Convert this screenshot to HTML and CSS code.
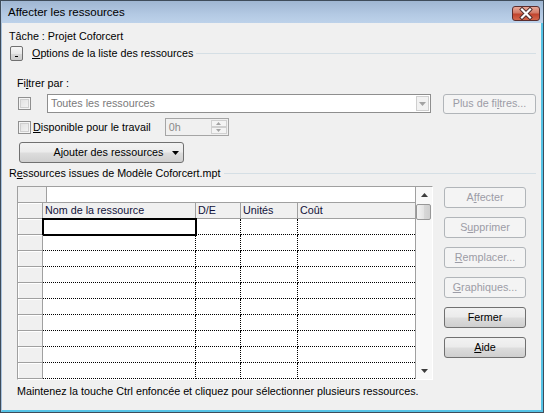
FILE: index.html
```html
<!DOCTYPE html>
<html lang="fr">
<head>
<meta charset="utf-8">
<title>Affecter les ressources</title>
<link rel="stylesheet" href="styles.css">
</head>
<body>
<div class="window">
  <div class="titlebar">
    <span class="title">Affecter les ressources</span>
    <div class="close">
      <svg width="28" height="15" viewBox="0 0 28 15">
        <path d="M10 3.5 L18 11.5 M18 3.5 L10 11.5" stroke="#4a2a2a" stroke-width="4" stroke-linecap="square"/>
        <path d="M10 3.5 L18 11.5 M18 3.5 L10 11.5" stroke="#ffffff" stroke-width="2.2" stroke-linecap="square"/>
      </svg>
    </div>
  </div>
  <div class="client">
    <div class="task">Tâche : Projet Coforcert</div>
    <div class="options">
      <span class="collapse"><span class="dash"></span></span>
      <span class="opt-label"><u>O</u>ptions de la liste des ressources</span>
      <span class="rule"></span>
    </div>
    <div class="filters">
      <div class="filter-title">Fi<u>l</u>trer par :</div>
      <div class="filter-row">
        <span class="check"></span>
        <div class="combo">
          <span class="combo-text">Toutes les ressources</span>
          <span class="combo-btn"><svg width="7" height="4" viewBox="0 0 7 4"><path d="M0 0 H7 L3.5 4 Z" fill="#a3a3a3"/></svg></span>
        </div>
        <button class="btn dis more">Plus de fi<u>l</u>tres...</button>
      </div>
      <div class="avail-row">
        <span class="check"></span>
        <span class="avail-label"><u>D</u>isponible pour le travail</span>
        <div class="spin">
          <span class="spin-text">0h</span>
          <div class="spin-btns">
            <span class="sb"><svg width="5" height="3" viewBox="0 0 5 3"><path d="M0 3 H5 L2.5 0 Z" fill="#a3a3a3"/></svg></span>
            <span class="sb"><svg width="5" height="3" viewBox="0 0 5 3"><path d="M0 0 H5 L2.5 3 Z" fill="#a3a3a3"/></svg></span>
          </div>
        </div>
      </div>
      <button class="btn add"><span class="add-text">A<u>j</u>outer des ressources</span><svg class="add-arrow" width="7" height="4" viewBox="0 0 7 4"><path d="M0 0 H7 L3.5 4 Z" fill="#000"/></svg></button>
    </div>
    <div class="section">
      <span class="sec-label">R<u>e</u>ssources issues de Modèle Coforcert.mpt</span>
      <span class="rule"></span>
    </div>
    <div class="main">
      <div class="grid">
        <div class="sheet">
          <div class="editbar"><span class="edit-box"></span><span class="edit-field"></span></div>
          <div class="hd rh"></div>
          <div class="hd">Nom de la ressource</div>
          <div class="hd">D/E</div>
          <div class="hd">Unités</div>
          <div class="hd last">Coût</div>

          <div class="rh"></div><div class="c sel"></div><div class="c"></div><div class="c"></div><div class="c last"></div>
          <div class="rh"></div><div class="c"></div><div class="c"></div><div class="c"></div><div class="c last"></div>
          <div class="rh"></div><div class="c"></div><div class="c"></div><div class="c"></div><div class="c last"></div>
          <div class="rh"></div><div class="c"></div><div class="c"></div><div class="c"></div><div class="c last"></div>
          <div class="rh"></div><div class="c"></div><div class="c"></div><div class="c"></div><div class="c last"></div>
          <div class="rh"></div><div class="c"></div><div class="c"></div><div class="c"></div><div class="c last"></div>
          <div class="rh"></div><div class="c"></div><div class="c"></div><div class="c"></div><div class="c last"></div>
          <div class="rh"></div><div class="c"></div><div class="c"></div><div class="c"></div><div class="c last"></div>
          <div class="rh"></div><div class="c"></div><div class="c"></div><div class="c"></div><div class="c last"></div>
          <div class="rh"></div><div class="c"></div><div class="c"></div><div class="c"></div><div class="c last"></div>
        </div>
        <div class="vscroll">
          <span class="arrow"><svg width="7" height="4" viewBox="0 0 7 4"><path d="M0 4 H7 L3.5 0 Z" fill="#3c3c3c"/></svg></span>
          <span class="thumb"></span>
          <span class="track"></span>
          <span class="arrow"><svg width="7" height="4" viewBox="0 0 7 4"><path d="M0 0 H7 L3.5 4 Z" fill="#3c3c3c"/></svg></span>
        </div>
      </div>
      <div class="actions">
        <button class="btn dis">A<u>f</u>fecter</button>
        <button class="btn dis">S<u>u</u>pprimer</button>
        <button class="btn dis"><u>R</u>emplacer...</button>
        <button class="btn dis"><u>G</u>raphiques...</button>
        <button class="btn">Fermer</button>
        <button class="btn"><u>A</u>ide</button>
      </div>
    </div>
    <div class="footer">Maintenez la touche Ctrl enfoncée et cliquez pour sélectionner plusieurs ressources.</div>
  </div>
</div>
</body>
</html>
```
FILE: styles.css
```css
* { box-sizing: border-box; }
html, body { margin: 0; padding: 0; }
body {
  width: 544px;
  height: 413px;
  overflow: hidden;
  font-family: "Liberation Sans", Arial, sans-serif;
  font-size: 10.75px;
  line-height: 13px;
  color: #000;
  background: #fff;
}
u { text-decoration: underline; text-underline-offset: 1px; }

.window {
  width: 544px;
  height: 413px;
  border: 1px solid #3f4c5a;
  display: flex;
  flex-direction: column;
  background: #f0f0f0;
}

.titlebar {
  height: 22px;
  flex: none;
  display: flex;
  align-items: center;
  padding: 0 3px 0 6px;
  background: linear-gradient(#9fb6d2, #b3c9e3 60%, #bdd2ea);
  border-left: 1px solid #b3c8e0;
}
.title {
  flex: 1;
  font-size: 11.5px;
  padding-top: 1px;
  color: #000;
}
.close {
  width: 28px;
  height: 15px;
  margin-top: 2px;
  border: 1px solid #5b2d2d;
  border-radius: 3px;
  background: linear-gradient(#e9a898, #d27a66 45%, #c0442e 55%, #d4674c);
  display: flex;
  align-items: center;
  justify-content: center;
  overflow: hidden;
}
.close svg { display: block; margin: -1px; }

.client {
  flex: 1;
  display: flex;
  flex-direction: column;
  padding: 7px 5px 0 7px;
  border-left: 1px solid #a9c3df;
  border-right: 2px solid #55c3e6;
  border-bottom: 2px solid #55c3e6;
  background: #f0f0f0;
}

.task { height: 13px; }

.options {
  display: flex;
  align-items: center;
  height: 15px;
  margin-top: 3px;
}
.collapse {
  width: 13px;
  height: 15px;
  margin-left: 1px;
  border: 1px solid #707070;
  border-radius: 2px;
  background: linear-gradient(#f6f6f6, #e8e8e8 50%, #d8d8d8 51%, #cdcdcd);
  display: flex;
  align-items: flex-end;
  justify-content: center;
  padding-bottom: 3px;
}
.dash { width: 3px; height: 1px; background: #000; }
.opt-label { margin-left: 9px; }
.rule {
  flex: 1;
  height: 1px;
  margin-left: 3px;
  background: #d5dfe5;
}

.filters {
  display: flex;
  flex-direction: column;
  align-items: flex-start;
  padding-left: 8px;
  margin-top: 16px;
}
.filter-title { height: 13px; }

.check {
  width: 13px;
  height: 13px;
  flex: none;
  margin-left: 1px;
  border: 1px solid #8f8f8f;
  background: linear-gradient(135deg, #dedede, #f6f6f6);
  box-shadow: inset 0 0 0 1px #f4f4f4, inset 0 0 0 2px #cfcfcf;
}

.filter-row {
  display: flex;
  align-items: center;
  height: 19px;
  margin-top: 4px;
}
.combo {
  width: 384px;
  height: 19px;
  margin-left: 16px;
  border: 1px solid #8e8e8e;
  background: #fff;
  display: flex;
  align-items: center;
  padding: 0 1px 0 3px;
}
.combo-text { flex: 1; color: #7a7a7a; }
.combo-btn {
  width: 13px;
  height: 15px;
  border: 1px solid #cfcfcf;
  background: #f2f2f2;
  display: flex;
  align-items: center;
  justify-content: center;
}
.combo-btn svg, .sb svg, .arrow svg, .add-arrow { display: block; }

.btn {
  height: 21px;
  padding: 0;
  border: 1px solid #707070;
  border-radius: 3px;
  background: linear-gradient(#f2f2f2, #ebebeb 48%, #dddddd 52%, #cfcfcf);
  font-family: "Liberation Sans", Arial, sans-serif;
  font-size: 10.75px;
  font-weight: 400;
  line-height: 13px;
  color: #000;
  display: flex;
  align-items: center;
  justify-content: center;
}
.btn.dis {
  border-color: #b1b5b9;
  background: #f4f4f4;
  color: #9c9ca6;
}
.more { width: 93px; height: 20px; margin-left: 12px; }

.avail-row {
  display: flex;
  align-items: center;
  height: 18px;
  margin-top: 5px;
}
.avail-label { margin-left: 2px; }
.spin {
  width: 64px;
  height: 18px;
  margin-left: 14px;
  border: 1px solid #a5a5a5;
  background: #f0f0f0;
  display: flex;
  align-items: center;
  padding: 0 1px 0 3px;
}
.spin-text { flex: 1; color: #8a8a8a; }
.spin-btns {
  width: 16px;
  height: 14px;
  display: flex;
  flex-direction: column;
}
.sb {
  flex: 1;
  border: 1px solid #d0d0d0;
  background: #f4f4f4;
  display: flex;
  align-items: center;
  justify-content: center;
}

.add {
  width: 165px;
  margin-top: 6px;
  margin-left: 2px;
  justify-content: flex-start;
  padding-left: 25px;
}
.add-text { width: 127px; text-align: center; }
.add-arrow { margin-left: 0; }

.section {
  display: flex;
  align-items: center;
  height: 13px;
  margin-top: 4px;
}

.main {
  display: flex;
  align-items: flex-start;
  margin-top: 6px;
  padding-left: 8px;
}
.grid {
  display: flex;
  border: 1px solid;
  border-color: #a0a0a0 #ffffff #ffffff #a0a0a0;
}
.sheet {
  display: grid;
  grid-template-columns: 25px 153px 45px 57px 117px;
  grid-auto-rows: 16px;
  background: #fff;
}
.editbar {
  grid-column: 1 / -1;
  display: flex;
  border-bottom: 1px solid #a0a0a0;
}
.edit-box {
  width: 29px;
  background: #f0f0f0;
  border-right: 1px solid #a0a0a0;
}
.edit-field { flex: 1; background: #fff; }

.hd {
  background: #f0f0f0;
  border-right: 1px solid #a0a0a0;
  border-bottom: 1px solid #a0a0a0;
  padding-left: 2px;
  line-height: 15px;
  white-space: nowrap;
  color: #10103a;
}
.rh {
  background: #f0f0f0;
  border-right: 1px solid #a0a0a0;
  border-bottom: 1px solid #a0a0a0;
  box-shadow: inset 1px 1px 0 #ffffff;
}
.c {
  border-right: 1px dotted #000;
  border-bottom: 1px dotted #000;
}
.last { border-right: none; }
.sel {
  outline: 2px solid #000;
  outline-offset: -1px;
}

.vscroll {
  width: 17px;
  border-left: 1px solid #a0a0a0;
  background: #f8f8f8;
  display: flex;
  flex-direction: column;
}
.arrow {
  height: 16px;
  display: flex;
  align-items: center;
  justify-content: center;
}
.thumb {
  height: 16px;
  margin: 1px 1px 0 0;
  border: 1px solid #979797;
  border-radius: 2px;
  background: linear-gradient(90deg, #f3f3f3, #e4e4e4 50%, #d8d8d8 51%, #cfcfcf);
}
.track { flex: 1; }

.actions {
  display: flex;
  flex-direction: column;
  gap: 9px;
  width: 82px;
  margin-left: 11px;
  margin-top: 1px;
}
.actions .btn { width: 82px; }

.footer {
  margin-top: 5px;
  padding-left: 8px;
  height: 13px;
}
```
